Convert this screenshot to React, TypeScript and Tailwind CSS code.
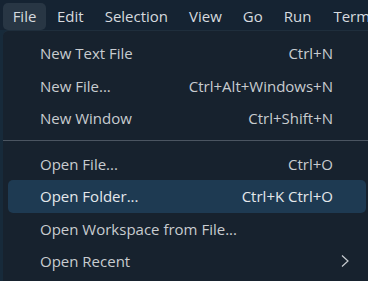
import React from "react";

const font = { fontFamily: '"Open Sans", "Noto Sans", sans-serif' };

function Row({ label, shortcut, active, sub }: { label: string; shortcut?: string; active?: boolean; sub?: boolean }) {
  return (
    <div className={"ml-[5px] mr-[2px] flex h-[32.5px] items-center rounded-[5px] pl-[32px] pr-[33px] " + (active ? "bg-[#1e3a52] text-[#e4e8ec]" : "text-[#c8ccd0]")}>
      <span className="flex-1 whitespace-nowrap">{label}</span>
      {shortcut && <span className="whitespace-nowrap">{shortcut}</span>}
      {sub && (
        <svg width="8" height="12" viewBox="0 0 8 12" className="-mr-[16px] ml-auto">
          <path d="M1 0.5 L7 6 L1 11.5" fill="none" stroke="#c8ccd0" strokeWidth="1.2" />
        </svg>
      )}
    </div>
  );
}

export default function App() {
  return (
    <div className="flex h-[281px] w-[368px] flex-col overflow-hidden bg-[#172a3a] text-[15px]" style={font}>
      <div className="flex h-[30px] shrink-0 items-center overflow-hidden bg-[#152332] pl-[3px] text-[#d6dadf]">
        <div className="mt-[3px] flex h-[27px] w-[43px] shrink-0 items-center justify-center rounded-[5px] bg-[#283644]">File</div>
        <div className="shrink-0 px-[11px] pt-[3px]">Edit</div>
        <div className="shrink-0 px-[10px] pt-[3px]">Selection</div>
        <div className="shrink-0 px-[11px] pt-[3px]">View</div>
        <div className="shrink-0 px-[10px] pt-[3px]">Go</div>
        <div className="shrink-0 px-[11px] pt-[3px]">Run</div>
        <div className="shrink-0 whitespace-nowrap pl-[11px] pt-[3px]">Terminal</div>
      </div>
      <div className="ml-[3px] flex-1 rounded-tl-[6px] border-t border-[#1f2e3c] bg-[#17222e] pt-[6px]">
        <Row label="New Text File" shortcut="Ctrl+N" />
        <Row label="New File..." shortcut="Ctrl+Alt+Windows+N" />
        <Row label="New Window" shortcut="Ctrl+Shift+N" />
        <div className="mb-[7px] mt-[5px] h-px bg-[#4b5561]" />
        <Row label="Open File..." shortcut="Ctrl+O" />
        <Row label="Open Folder..." shortcut="Ctrl+K Ctrl+O" active />
        <Row label="Open Workspace from File..." />
        <Row label="Open Recent" sub />
      </div>
    </div>
  );
}
